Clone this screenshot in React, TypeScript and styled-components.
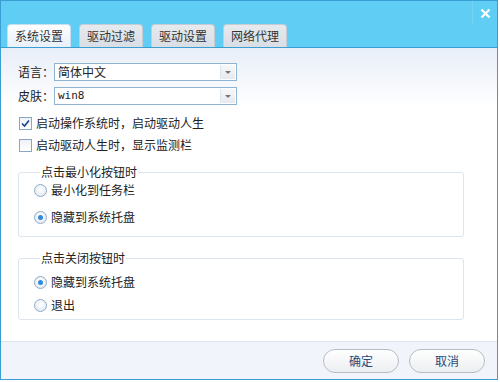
import styled, { createGlobalStyle } from "styled-components";

const Global = createGlobalStyle`
  body {
    margin: 0;
    background: #ffffff;
    font-family: "Noto Sans CJK SC", "Liberation Sans", sans-serif;
    font-size: 12px;
    line-height: 16px;
    color: #222;
  }
`;

const Window = styled.div`
  width: 496px;
  height: 378px;
  border: 1px solid #3b9ed3;
  display: flex;
  flex-direction: column;
  overflow: hidden;
`;

const TitleBar = styled.div`
  height: 46px;
  background: #5fcdf4;
  border-bottom: 1px solid #3b9ed3;
  display: flex;
  align-items: flex-end;
  position: relative;
  padding-left: 6px;
  gap: 8px;
`;

const Close = styled.div`
  position: absolute;
  top: 0;
  right: 0;
  width: 24px;
  height: 24px;
  border-left: 1px solid #74d4f5;
  display: flex;
  align-items: center;
  justify-content: center;
`;

const Tab = styled.div<{ $active?: boolean }>`
  width: 62px;
  height: 22px;
  border: 1px solid ${(p) => (p.$active ? "#c9dff0" : "#c6ccd3")};
  border-bottom: none;
  border-radius: 4px 4px 0 0;
  background: ${(p) =>
    p.$active
      ? "linear-gradient(#fdfeff, #e8f0fa)"
      : "linear-gradient(#e6eaee, #d9dee4)"};
  display: flex;
  align-items: center;
  justify-content: center;
  color: #333;
`;

const Body = styled.div`
  flex: 1;
  background: linear-gradient(#e8eef8 0px, #ffffff 60px);
  padding: 15px 33px 0 17px;
  display: flex;
  flex-direction: column;
`;

const Row = styled.div`
  display: flex;
  align-items: center;
  height: 18px;
  margin-bottom: 6px;
`;

const Label = styled.span`
  width: 36px;
`;

const Select = styled.div`
  width: 178px;
  height: 16px;
  border: 1px solid #8fb3d3;
  background: #fff;
  display: flex;
  align-items: center;
  justify-content: space-between;
  padding-left: 3px;
`;

const Mono = styled.span`
  font-family: "DejaVu Sans Mono", monospace;
  font-size: 11px;
`;

const Arrow = styled.div`
  width: 14px;
  height: 14px;
  margin-right: 1px;
  border-left: 1px solid #dde3ea;
  background: linear-gradient(#f7f8fa, #e6e9ee);
  display: flex;
  align-items: center;
  justify-content: center;
`;

const Checks = styled.div`
  display: flex;
  flex-direction: column;
  gap: 6px;
  margin: 4px 0 11px 1px;
`;

const Check = styled.div`
  display: flex;
  align-items: center;
  gap: 4px;
  height: 16px;
`;

const Box = styled.div`
  width: 11px;
  height: 11px;
  border: 1px solid #8aa6c5;
  background: linear-gradient(#eef2f7, #fff);
  display: flex;
  align-items: center;
  justify-content: center;
`;

const Group = styled.fieldset<{ $pt: number; $gap: number; $pb: number }>`
  margin: 0 0 13px 0;
  padding: ${(p) => `${p.$pt}px 0 ${p.$pb}px 15px`};
  border: 1px solid #dce4ee;
  border-radius: 3px;
  display: flex;
  flex-direction: column;
  gap: ${(p) => p.$gap}px;
`;

const Legend = styled.legend`
  padding: 0 1px;
  margin-left: 6px;
  line-height: 16px;
`;

const Radio = styled.div`
  display: flex;
  align-items: center;
  gap: 4px;
  height: 16px;
`;

const Dot = styled.div<{ $on?: boolean }>`
  width: 11px;
  height: 11px;
  border-radius: 50%;
  border: 1px solid #8eabc9;
  background: radial-gradient(circle at 50% 40%, #ffffff, #dfe6ef);
  display: flex;
  align-items: center;
  justify-content: center;
  &::after {
    content: "";
    display: ${(p) => (p.$on ? "block" : "none")};
    width: 5px;
    height: 5px;
    border-radius: 50%;
    background: #2f8ad8;
  }
`;

const Footer = styled.div`
  margin-top: auto;
  height: 37px;
  background: #f1f5fb;
  border-top: 1px solid #dbe3ec;
  display: flex;
  align-items: center;
  justify-content: flex-end;
  gap: 10px;
  padding-right: 12px;
`;

const Button = styled.div`
  width: 74px;
  height: 22px;
  border: 1px solid #b7bcc4;
  border-radius: 12px;
  background: linear-gradient(#ffffff, #eceef1);
  display: flex;
  align-items: center;
  justify-content: center;
  color: #1f4a7a;
`;

function DropArrow() {
  return (
    <Arrow>
      <svg width="6" height="3" viewBox="0 0 6 3">
        <path d="M0 0H6L3 3Z" fill="#777" />
      </svg>
    </Arrow>
  );
}

export default function App() {
  return (
    <>
      <Global />
      <Window>
        <TitleBar>
          <Tab $active>系统设置</Tab>
          <Tab>驱动过滤</Tab>
          <Tab>驱动设置</Tab>
          <Tab>网络代理</Tab>
          <Close>
            <svg width="11" height="11" viewBox="0 0 11 11">
              <path d="M1.5 1.5L9.5 9.5M9.5 1.5L1.5 9.5" stroke="#fff" strokeWidth="2.2" />
            </svg>
          </Close>
        </TitleBar>
        <Body>
          <Row>
            <Label>语言：</Label>
            <Select>
              简体中文
              <DropArrow />
            </Select>
          </Row>
          <Row>
            <Label>皮肤：</Label>
            <Select>
              <Mono>win8</Mono>
              <DropArrow />
            </Select>
          </Row>
          <Checks>
            <Check>
              <Box>
                <svg width="9" height="9" viewBox="0 0 9 9">
                  <path d="M1 4.5L3.5 7L8 1.5" stroke="#1c3e8c" strokeWidth="1.6" fill="none" />
                </svg>
              </Box>
              启动操作系统时，启动驱动人生
            </Check>
            <Check>
              <Box />
              启动驱动人生时，显示监测栏
            </Check>
          </Checks>
          <Group $pt={2} $gap={11} $pb={11}>
            <Legend>点击最小化按钮时</Legend>
            <Radio>
              <Dot />
              最小化到任务栏
            </Radio>
            <Radio>
              <Dot $on />
              隐藏到系统托盘
            </Radio>
          </Group>
          <Group $pt={8} $gap={7} $pb={6}>
            <Legend>点击关闭按钮时</Legend>
            <Radio>
              <Dot $on />
              隐藏到系统托盘
            </Radio>
            <Radio>
              <Dot />
              退出
            </Radio>
          </Group>
        </Body>
        <Footer>
          <Button>确定</Button>
          <Button>取消</Button>
        </Footer>
      </Window>
    </>
  );
}
